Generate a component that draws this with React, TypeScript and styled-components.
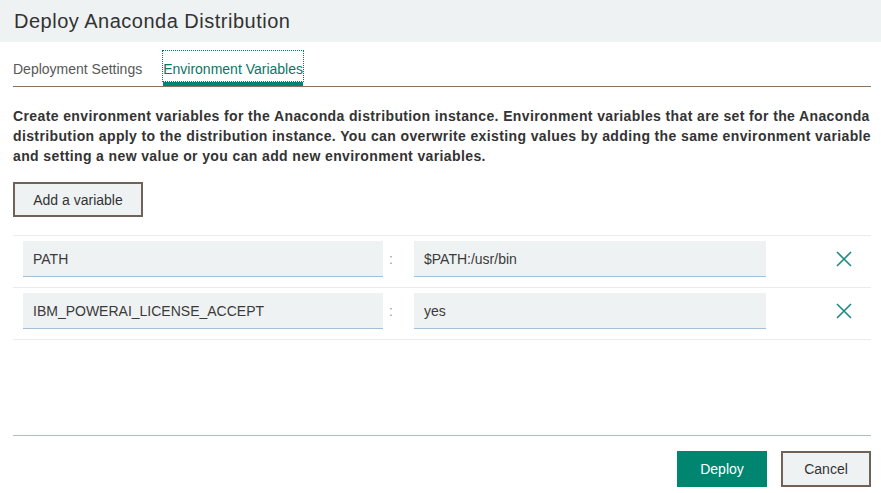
import React from "react";
import styled, { createGlobalStyle } from "styled-components";

const Global = createGlobalStyle`
  html, body { margin: 0; padding: 0; background: #ffffff; }
  body { font-family: "Liberation Sans", Arial, sans-serif; color: #333333; }
  * { box-sizing: border-box; }
`;

const Page = styled.div`
  display: flex;
  flex-direction: column;
  width: 881px;
  height: 493px;
  overflow: hidden;
`;

const Header = styled.header`
  height: 42px;
  background: #eff2f3;
  padding-left: 14px;
  display: flex;
  align-items: center;
`;

const Title = styled.h1`
  margin: 0;
  font-size: 20px;
  font-weight: normal;
  color: #323232;
  letter-spacing: 0.5px;
`;

const Tabs = styled.nav`
  display: flex;
  gap: 21px;
  margin: 0 10px 0 13px;
  padding-top: 9px;
  border-bottom: 1px solid #8c7361;
`;

const Tab = styled.div<{ $active?: boolean }>`
  display: flex;
  flex-direction: column;
  padding-bottom: 1px;
  border-bottom: 4px solid ${(p) => (p.$active ? "#008571" : "transparent")};
`;

const TabLabel = styled.span<{ $active?: boolean }>`
  height: 30px;
  padding-top: 10px;
  line-height: 16px;
  font-size: 14px;
  white-space: nowrap;
  color: ${(p) => (p.$active ? "#0b7566" : "#585858")};
  outline: ${(p) => (p.$active ? "1px dotted #0b7566" : "none")};
`;

const Description = styled.p`
  margin: 19px 10px 0 13px;
  font-size: 14px;
  line-height: 20px;
  font-weight: bold;
  letter-spacing: 0.38px;
  color: #333333;
`;

const SecondaryButton = styled.button`
  height: 35px;
  background: #eff2f3;
  border: 2px solid #6f6259;
  font-family: "Liberation Sans", Arial, sans-serif;
  font-size: 14px;
  color: #333333;
  padding: 0;
  cursor: pointer;
`;

const AddButton = styled(SecondaryButton)`
  width: 130px;
  margin: 16px 0 0 13px;
  align-self: flex-start;
`;

const VarTable = styled.div`
  margin: 18px 10px 0 13px;
  border-bottom: 1px solid #ebebeb;
`;

const VarRow = styled.div`
  display: flex;
  align-items: center;
  border-top: 1px solid #ebebeb;
  padding: 5px 0 10px 10px;
`;

const Field = styled.div<{ $w: number }>`
  width: ${(p) => p.$w}px;
  height: 36px;
  background: #eff2f3;
  border-bottom: 1px solid #a3c0d8;
  padding: 0 10px;
  display: flex;
  align-items: center;
  font-size: 14px;
  color: #3a3a3a;
`;

const Colon = styled.span`
  width: 31px;
  padding-left: 6px;
  font-size: 14px;
  color: #9a9a9a;
`;

const RemoveButton = styled.button`
  margin-left: 70px;
  width: 16px;
  height: 16px;
  padding: 0;
  border: none;
  background: none;
  display: flex;
  cursor: pointer;
`;

const Footer = styled.footer`
  margin: auto 10px 6px 13px;
  border-top: 1px solid #aebdcb;
  padding-top: 15px;
  display: flex;
  justify-content: flex-end;
  gap: 14px;
`;

const PrimaryButton = styled.button`
  width: 90px;
  height: 36px;
  background: #008571;
  border: none;
  color: #ffffff;
  font-family: "Liberation Sans", Arial, sans-serif;
  font-size: 14px;
  cursor: pointer;
`;

const CancelButton = styled(SecondaryButton)`
  width: 90px;
  height: 36px;
`;

const XIcon = () => (
  <svg width="16" height="16" viewBox="0 0 16 16">
    <path d="M1 1 L15 15 M15 1 L1 15" stroke="#1b8a85" strokeWidth="1.6" fill="none" />
  </svg>
);

const vars = [
  { key: "PATH", value: "$PATH:/usr/bin" },
  { key: "IBM_POWERAI_LICENSE_ACCEPT", value: "yes" },
];

export default function App() {
  return (
    <Page>
      <Global />
      <Header>
        <Title>Deploy Anaconda Distribution</Title>
      </Header>
      <Tabs>
        <Tab>
          <TabLabel>Deployment Settings</TabLabel>
        </Tab>
        <Tab $active>
          <TabLabel $active>Environment Variables</TabLabel>
        </Tab>
      </Tabs>
      <Description>
        Create environment variables for the Anaconda distribution instance. Environment variables that are set for the
        Anaconda distribution apply to the distribution instance. You can overwrite existing values by adding the same
        environment variable and setting a new value or you can add new environment variables.
      </Description>
      <AddButton>Add a variable</AddButton>
      <VarTable>
        {vars.map((v) => (
          <VarRow key={v.key}>
            <Field $w={360}>{v.key}</Field>
            <Colon>:</Colon>
            <Field $w={352}>{v.value}</Field>
            <RemoveButton aria-label="Remove">
              <XIcon />
            </RemoveButton>
          </VarRow>
        ))}
      </VarTable>
      <Footer>
        <PrimaryButton>Deploy</PrimaryButton>
        <CancelButton>Cancel</CancelButton>
      </Footer>
    </Page>
  );
}
